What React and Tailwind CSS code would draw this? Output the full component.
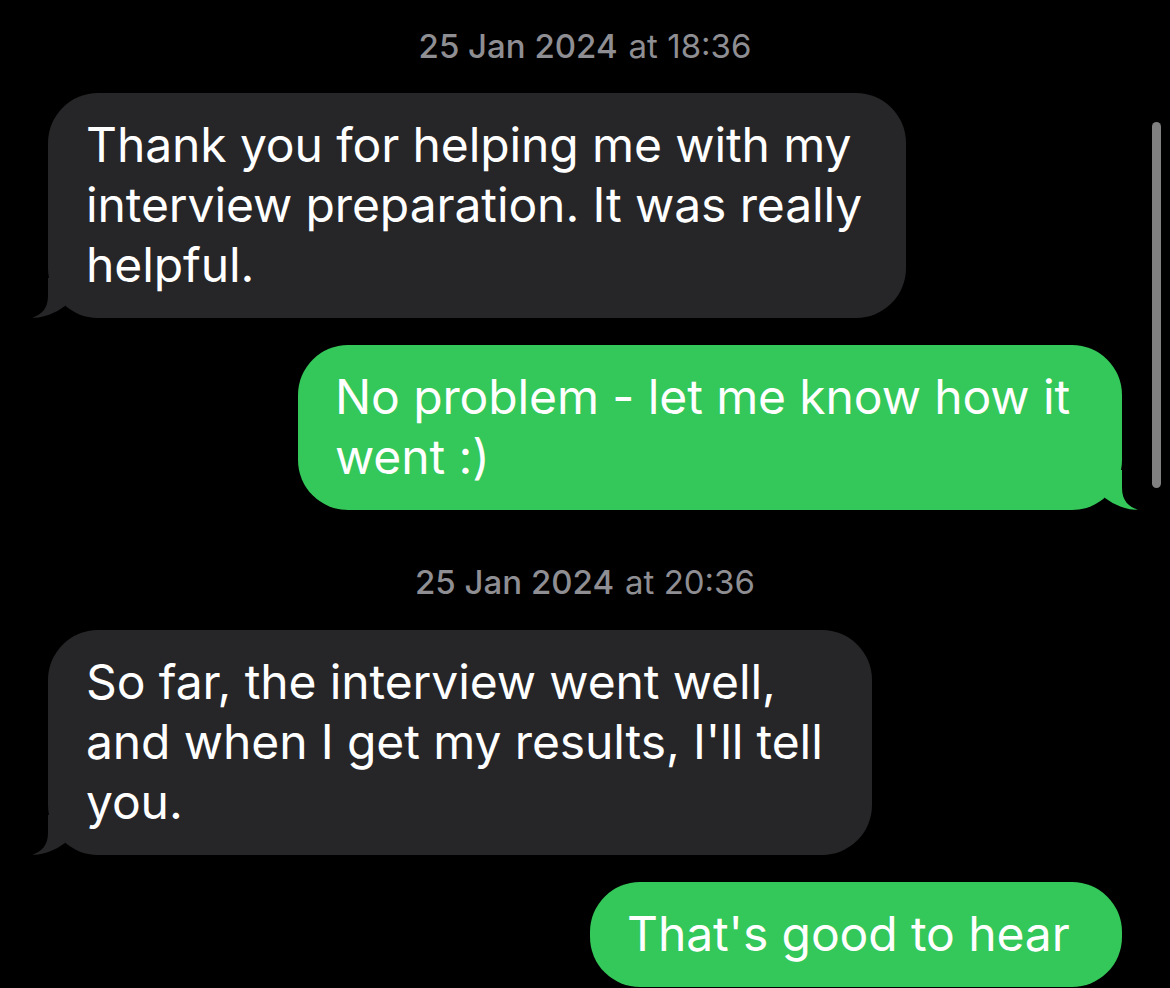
const font = { fontFamily: '"Inter", "Noto Sans", sans-serif' };

const Tail = ({ side, color }) => (
  <svg
    width="40"
    height="40"
    viewBox="0 0 40 40"
    className={`absolute bottom-0 ${side === "left" ? "-left-[16px]" : "-right-[16px] -scale-x-100"}`}
  >
    <path
      d="M16 0 L16 18 C16 31 9 37 0 39.5 C10 40.5 22 36 33 28 L33 0 Z"
      fill={color}
    />
  </svg>
);

const Stamp = ({ date, time }) => (
  <div className="h-[40px] flex items-center justify-center text-[33px] leading-[40px] text-[#8e8e93]">
    <span className="font-medium">{date}</span>
    <span className="ml-[11px]">at {time}</span>
  </div>
);

const Bubble = ({ from, width, lines }) => {
  const mine = from === "me";
  const color = mine ? "#34c759" : "#262628";
  return (
    <div className={`flex ${mine ? "justify-end pr-[48px]" : "justify-start pl-[48px]"}`}>
      <div
        className={`relative rounded-[50px] py-[22px] ${mine ? "bg-[#34c759] pl-[37px]" : "bg-[#262628] pl-[38px]"}`}
        style={{ width, minHeight: lines.length * 60 + 45 }}
      >
        {lines.map((l, i) => (
          <div key={i} className="text-[48px] leading-[60px] text-white whitespace-nowrap tracking-[-0.1px]">
            {l}
          </div>
        ))}
        <Tail side={mine ? "right" : "left"} color={color} />
      </div>
    </div>
  );
};

const App = () => {
  return (
    <div className="relative w-full h-[988px] bg-black overflow-hidden" style={font}>
      <div className="flex flex-col pt-[26px]">
        <Stamp date="25 Jan 2024" time="18:36" />
        <div className="mt-[27px]">
          <Bubble
            from="them"
            width={858}
            lines={["Thank you for helping me with my", "interview preparation. It was really", "helpful."]}
          />
        </div>
        <div className="mt-[27px]">
          <Bubble from="me" width={824} lines={["No problem - let me know how it", "went :)"]} />
        </div>
        <div className="mt-[52px]">
          <Stamp date="25 Jan 2024" time="20:36" />
        </div>
        <div className="mt-[28px]">
          <Bubble
            from="them"
            width={824}
            lines={["So far, the interview went well,", "and when I get my results, I'll tell", "you."]}
          />
        </div>
        <div className="mt-[27px] [&_svg]:hidden">
          <Bubble from="me" width={532} lines={["That's good to hear"]} />
        </div>
      </div>
      <div className="absolute left-[1152px] top-[122px] w-[9px] h-[366px] rounded-full bg-[#808080]" />
    </div>
  );
};

export default App;
